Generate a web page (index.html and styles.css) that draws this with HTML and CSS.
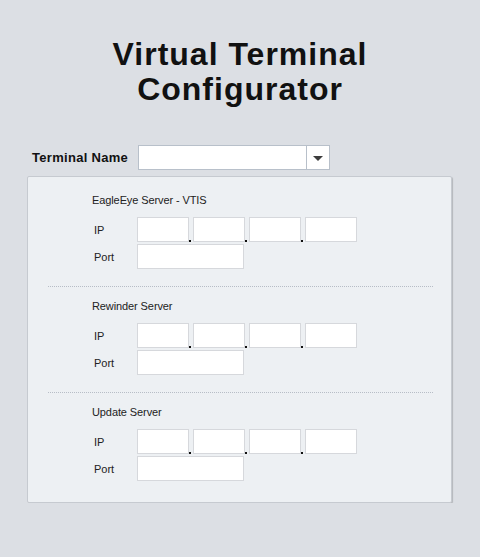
FILE: index.html
```html
<!DOCTYPE html>
<html>
<head>
<meta charset="utf-8">
<link rel="stylesheet" href="styles.css">
</head>
<body>
<div class="page">
  <h1 class="title">Virtual Terminal<br>Configurator</h1>
  <div class="name-row">
    <label class="name-label">Terminal Name</label>
    <div class="select">
      <span class="select-value"></span>
      <span class="select-btn"><span class="caret"></span></span>
    </div>
  </div>
  <div class="panel">
    <section class="server">
      <div class="server-title">EagleEye Server - VTIS</div>
      <div class="field-row">
        <span class="field-label">IP</span>
        <div class="ip">
          <input class="box octet" type="text"><span class="dot"></span>
          <input class="box octet" type="text"><span class="dot"></span>
          <input class="box octet" type="text"><span class="dot"></span>
          <input class="box octet" type="text">
        </div>
      </div>
      <div class="field-row">
        <span class="field-label">Port</span>
        <input class="box port" type="text">
      </div>
    </section>
    <div class="sep"></div>
    <section class="server">
      <div class="server-title">Rewinder Server</div>
      <div class="field-row">
        <span class="field-label">IP</span>
        <div class="ip">
          <input class="box octet" type="text"><span class="dot"></span>
          <input class="box octet" type="text"><span class="dot"></span>
          <input class="box octet" type="text"><span class="dot"></span>
          <input class="box octet" type="text">
        </div>
      </div>
      <div class="field-row">
        <span class="field-label">Port</span>
        <input class="box port" type="text">
      </div>
    </section>
    <div class="sep"></div>
    <section class="server">
      <div class="server-title">Update Server</div>
      <div class="field-row">
        <span class="field-label">IP</span>
        <div class="ip">
          <input class="box octet" type="text"><span class="dot"></span>
          <input class="box octet" type="text"><span class="dot"></span>
          <input class="box octet" type="text"><span class="dot"></span>
          <input class="box octet" type="text">
        </div>
      </div>
      <div class="field-row">
        <span class="field-label">Port</span>
        <input class="box port" type="text">
      </div>
    </section>
  </div>
</div>
</body>
</html>
```
FILE: styles.css
```css
html, body {
  margin: 0;
  padding: 0;
  background: #dcdfe4;
}
body {
  font-family: "Liberation Sans", Arial, sans-serif;
  color: #222;
}
.page {
  width: 425px;
  margin: 0 0 0 27px;
  padding-top: 37px;
}
.title {
  margin: 0;
  font-family: "Liberation Sans", Arial, sans-serif;
  font-weight: bold;
  font-size: 32px;
  line-height: 35px;
  letter-spacing: 1px;
  text-align: center;
  color: #111;
  width: 426px;
}
.name-row {
  display: flex;
  align-items: center;
  margin-top: 38px;
  padding-left: 5px;
  gap: 9px;
}
.name-label {
  font-family: "Liberation Sans", Arial, sans-serif;
  font-weight: bold;
  font-size: 13px;
  letter-spacing: 0.3px;
  color: #111;
  width: 97px;
}
.select {
  display: flex;
  box-sizing: border-box;
  width: 192px;
  height: 25px;
  background: #fff;
  border: 1px solid #b8c0ca;
}
.select-value {
  flex: 1;
}
.select-btn {
  width: 22px;
  border-left: 1px solid #b8c0ca;
  display: flex;
  align-items: center;
  justify-content: center;
}
.caret {
  width: 0;
  height: 0;
  border-left: 5px solid transparent;
  border-right: 5px solid transparent;
  border-top: 5px solid #3c3c3c;
  margin-top: 1px;
}
.panel {
  margin-top: 6px;
  background: #edf0f3;
  border: 1px solid #c6cad0;
  border-radius: 2px;
  box-shadow: 1px 1px 1px rgba(0, 0, 0, 0.18);
  padding: 16px 18px 21px 20px;
}
.server {
  padding-left: 44px;
}
.server-title {
  font-size: 11px;
  letter-spacing: -0.1px;
  line-height: 14px;
  margin-bottom: 10px;
}
.field-row {
  display: flex;
  align-items: center;
  height: 25px;
}
.field-row + .field-row {
  margin-top: 2px;
}
.field-label {
  width: 43px;
  padding-left: 2px;
  font-size: 11px;
}
.ip {
  display: flex;
  align-items: flex-end;
  height: 25px;
}
.box {
  box-sizing: border-box;
  height: 25px;
  margin: 0;
  padding: 0 3px;
  border: 1px solid #d6d8dc;
  background: #fff;
  outline: none;
  font-family: "Liberation Sans", Arial, sans-serif;
  font-size: 11px;
}
.octet {
  width: 52px;
}
.dot {
  width: 2px;
  height: 2px;
  background: #111;
  margin: 0 2px 0 0;
}
.port {
  width: 107px;
}
.sep {
  border-top: 1px dotted #b7bdc6;
  margin: 17px 0 12px 0;
}
```
